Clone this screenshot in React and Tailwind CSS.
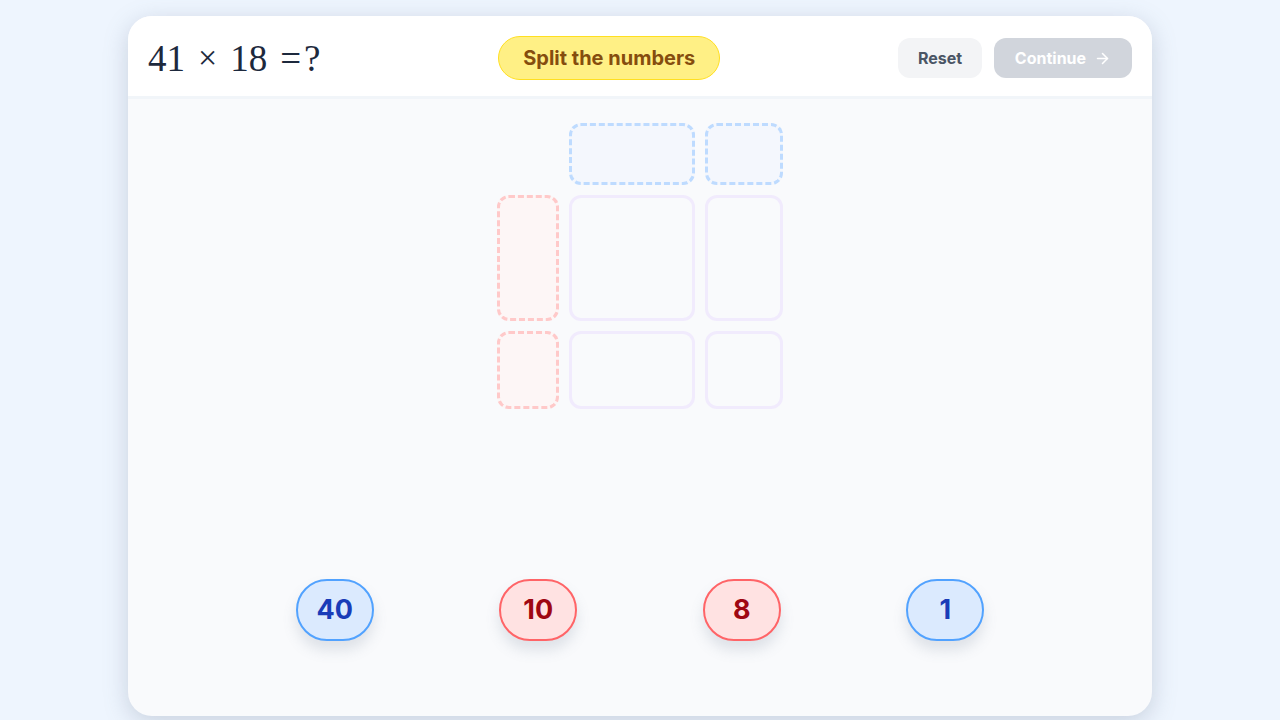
import { ArrowRight } from 'lucide-react';

const serif = { fontFamily: '"Liberation Serif", "DejaVu Serif", serif' };

function Chip({ value, tone }) {
  const cls =
    tone === 'blue'
      ? 'bg-blue-100 border-blue-400 text-blue-800 shadow-[0_9px_14px_rgba(100,116,139,0.18)]'
      : 'bg-red-100 border-red-400 text-red-800 shadow-[0_9px_14px_rgba(100,116,139,0.18)]';
  return (
    <div
      className={`w-[78px] h-[62px] rounded-full border-2 flex items-center justify-center text-[27px] font-bold ${cls}`}
    >
      {value}
    </div>
  );
}

export default function App() {
  return (
    <div
      className="w-[1280px] h-[720px] bg-[#eef5fe] flex justify-center pt-4 overflow-hidden"
      style={{ fontFamily: 'Inter, "Noto Sans", sans-serif' }}
    >
      <div className="w-[1024px] h-[700px] rounded-[24px] bg-[#f9fafc] overflow-hidden flex flex-col shadow-[0_6px_24px_rgba(100,116,139,0.28)]">
        <header className="h-[83px] shrink-0 bg-white border-b-[3px] border-slate-100 flex items-center justify-between px-5 pt-[4px]">
          <div className="flex items-center text-[37px] text-slate-800 leading-none" style={serif}>
            <span>41</span>
            <span className="mx-[13px] text-[34px]">×</span>
            <span>18</span>
            <span className="ml-[13px]">=</span>
            <span className="ml-[3px]">?</span>
          </div>
          <div className="h-[44px] px-[24px] rounded-full bg-yellow-200 border border-yellow-300 flex items-center text-[20px] font-bold text-[#854d0e]">
            Split the numbers
          </div>
          <div className="flex items-center gap-3">
            <button className="h-10 w-[84px] rounded-xl bg-gray-100 text-gray-600 text-[16px] font-bold">
              Reset
            </button>
            <button className="h-10 w-[138px] rounded-xl bg-gray-300 text-white text-[16px] font-bold flex items-center justify-center gap-2">
              Continue
              <ArrowRight className="w-[17px] h-[17px]" strokeWidth={2.2} />
            </button>
          </div>
        </header>

        <div className="flex-1 flex flex-col items-center">
          <div className="mt-[24px] grid grid-cols-[62px_126px_78px] grid-rows-[62px_126px_78px] gap-[10px]">
            <div />
            <div className="rounded-xl border-[3px] border-dashed border-blue-200 bg-[#f4f7fd]" />
            <div className="rounded-xl border-[3px] border-dashed border-blue-200 bg-[#f4f7fd]" />
            <div className="rounded-xl border-[3px] border-dashed border-red-200 bg-[#fdf6f6]" />
            <div className="rounded-xl border-[3px] border-[#f1ebfd]" />
            <div className="rounded-xl border-[3px] border-[#f1ebfd]" />
            <div className="rounded-xl border-[3px] border-dashed border-red-200 bg-[#fdf6f6]" />
            <div className="rounded-xl border-[3px] border-[#f1ebfd]" />
            <div className="rounded-xl border-[3px] border-[#f1ebfd]" />
          </div>

          <div className="mt-[170px] flex justify-center gap-[125.5px]">
            <Chip value="40" tone="blue" />
            <Chip value="10" tone="red" />
            <Chip value="8" tone="red" />
            <Chip value="1" tone="blue" />
          </div>
        </div>
      </div>
    </div>
  );
}
